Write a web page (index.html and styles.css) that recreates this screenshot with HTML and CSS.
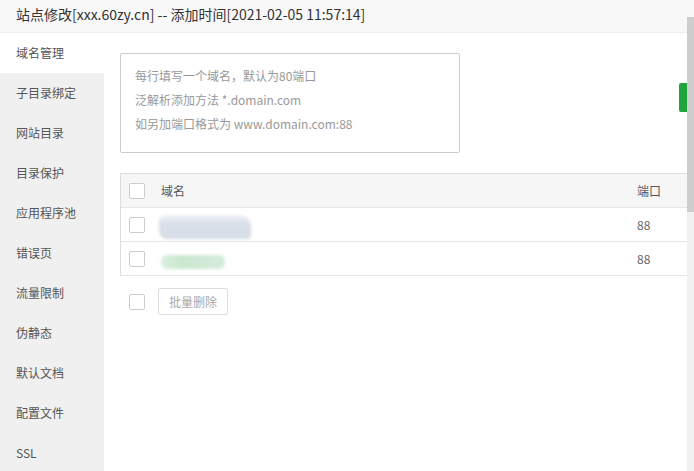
FILE: index.html
```html
<!DOCTYPE html>
<html>
<head>
  <meta charset="UTF-8" />
  <title>站点修改</title>
  <link rel="stylesheet" href="styles.css">
</head>
<body>
  <div class="layer">
    <div class="layer-title">站点修改[xxx.60zy.cn] -- 添加时间[2021-02-05 11:57:14]</div>
    <div class="layer-body">
      <ul class="tab-nav">
        <li class="active">域名管理</li>
        <li>子目录绑定</li>
        <li>网站目录</li>
        <li>目录保护</li>
        <li>应用程序池</li>
        <li>错误页</li>
        <li>流量限制</li>
        <li>伪静态</li>
        <li>默认文档</li>
        <li>配置文件</li>
        <li>SSL</li>
      </ul>
      <div class="tab-con">
        <div class="add-row">
          <div class="domain-input">
            <p>每行填写一个域名，默认为80端口</p>
            <p>泛解析添加方法 *.domain.com</p>
            <p>如另加端口格式为 www.domain.com:88</p>
          </div>
          <button class="btn-add"></button>
        </div>
        <div class="table">
          <div class="tr thead">
            <div class="td"><span class="check"></span></div>
            <div class="td">域名</div>
            <div class="td port">端口</div>
          </div>
          <div class="tr">
            <div class="td"><span class="check"></span></div>
            <div class="td"><span class="mask mask-gray"></span></div>
            <div class="td port">88</div>
          </div>
          <div class="tr">
            <div class="td"><span class="check"></span></div>
            <div class="td"><span class="mask mask-green"></span></div>
            <div class="td port">88</div>
          </div>
        </div>
        <div class="batch">
          <span class="check"></span>
          <button class="btn-batch">批量删除</button>
        </div>
      </div>
    </div>
    <div class="scrollbar"><div class="thumb"></div></div>
  </div>
</body>
</html>
```

FILE: styles.css
```css
body {
  margin: 0;
  font-family: "Microsoft YaHei", "Noto Sans CJK SC", "Liberation Sans", sans-serif;
  color: #333;
  background: #fff;
  overflow: hidden;
}
.layer {
  position: relative;
  width: 694px;
  height: 471px;
  overflow: hidden;
}
.layer-title {
  height: 33px;
  line-height: 28px;
  padding-left: 16px;
  font-size: 14px;
  color: #333;
  background: #f8f8f8;
  border-bottom: 1px solid #eee;
  box-sizing: border-box;
}
.layer-body {
  display: flex;
  height: 438px;
}
.tab-nav {
  list-style: none;
  margin: 0;
  padding: 0;
  width: 104px;
  flex-shrink: 0;
  background: #f0f0f0;
}
.tab-nav li {
  height: 40px;
  line-height: 40px;
  padding-left: 16px;
  font-size: 12px;
  color: #555;
}
.tab-nav li.active {
  background: #fff;
}
.tab-con {
  flex: 1;
  padding: 20px 7px 0 16px;
  overflow: hidden;
}
.add-row {
  display: flex;
  align-items: flex-start;
}
.domain-input {
  width: 340px;
  height: 100px;
  box-sizing: border-box;
  border: 1px solid #ccc;
  border-radius: 2px;
  padding: 10px 14px;
  font-size: 12px;
  color: #999;
}
.domain-input p {
  margin: 0;
  line-height: 24px;
}
.btn-add {
  margin-left: auto;
  margin-top: 30px;
  width: 8px;
  height: 29px;
  border: none;
  padding: 0;
  background: #20a53a;
  border-radius: 2px 0 0 2px;
}
.table {
  margin-top: 20px;
  border-left: 1px solid #ddd;
  border-top: 1px solid #ddd;
}
.tr {
  display: grid;
  grid-template-columns: 40px 1fr 59px;
  height: 34px;
  border-bottom: 1px solid #e6e6e6;
  box-sizing: border-box;
  font-size: 12px;
  color: #666;
}
.thead {
  background: #f6f6f6;
  color: #555;
}
.td {
  display: flex;
  align-items: center;
}
.td:first-child {
  padding-left: 8px;
}
.port {
  padding-left: 9px;
}
.check {
  display: inline-block;
  width: 14px;
  height: 14px;
  border: 1px solid #ccc;
  border-radius: 2px;
  background: #fff;
}
.mask {
  display: inline-block;
  filter: blur(1.5px);
}
.mask-gray {
  width: 92px;
  height: 24px;
  margin-top: 4px;
  margin-left: -2px;
  background: linear-gradient(180deg, #eef1f5 0%, #d8dfe7 40%, #d6dde6 100%);
  border-radius: 6px 12px 4px 8px;
}
.mask-green {
  width: 64px;
  height: 14px;
  margin-top: 6px;
  background: linear-gradient(90deg, #dcefdf 0%, #c9e7cf 35%, #d6ecda 100%);
  border-radius: 6px;
}
.batch {
  display: flex;
  align-items: center;
  gap: 13px;
  margin-top: 12px;
  padding-left: 9px;
}
.btn-batch {
  height: 27px;
  padding: 0 10px;
  font-family: inherit;
  font-size: 12px;
  color: #aaa;
  background: #fff;
  border: 1px solid #ddd;
  border-radius: 2px;
}
.scrollbar {
  position: absolute;
  top: 17px;
  right: 0;
  bottom: 0;
  width: 7px;
  background: #f1f1f1;
}
.thumb {
  height: 195px;
  background: #cdcdcd;
}
```
